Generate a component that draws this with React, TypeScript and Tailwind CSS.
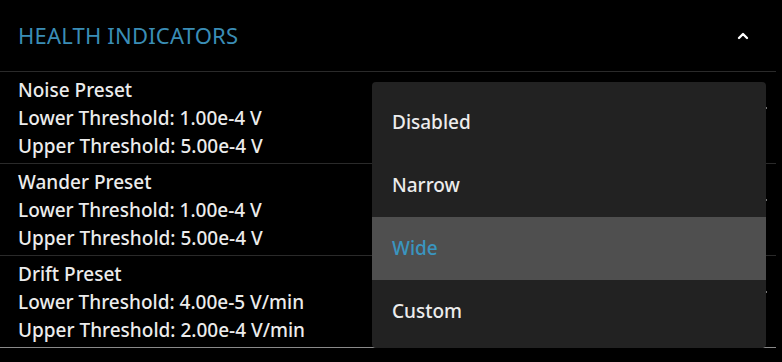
import { ChevronUp } from "lucide-react";

const presets = [
  { name: "Noise Preset", lower: "1.00e-4 V", upper: "5.00e-4 V" },
  { name: "Wander Preset", lower: "1.00e-4 V", upper: "5.00e-4 V" },
  { name: "Drift Preset", lower: "4.00e-5 V/min", upper: "2.00e-4 V/min" },
];

const options = ["Disabled", "Narrow", "Wide", "Custom"];

export default function App() {
  return (
    <div
      className="relative w-[782px] h-[362px] bg-black overflow-hidden text-[#ececec]"
      style={{ fontFamily: '"Noto Sans", "Open Sans", sans-serif' }}
    >
      <div className="w-[776px]">
        {/* Header */}
        <div className="flex items-center justify-between h-[72px] pl-[18px] pr-[25px] border-b border-[#2a2a2a]">
          <h2 className="text-[22px] tracking-[0.2px] text-[#3a8db6]">HEALTH INDICATORS</h2>
          <ChevronUp className="h-4 w-4 text-white" strokeWidth={3.5} />
        </div>

        {presets.map((p, i) => (
          <div
            key={p.name}
            className={`relative pl-[18px] pt-[4px] pb-[3px] text-[19px] font-medium leading-[28px] border-b ${
              i === presets.length - 1 ? "border-[#8a8a8a]" : "border-[#2a2a2a]"
            }`}
          >
            <div>{p.name}</div>
            <div>Lower Threshold: {p.lower}</div>
            <div>Upper Threshold: {p.upper}</div>
            <span className="absolute right-[9px] top-[35px] w-[2px] h-[2px] bg-[#777]" />
          </div>
        ))}
      </div>

      {/* Select menu */}
      <div className="absolute left-[372px] top-[82px] w-[394px] rounded-[4px] bg-[#222222] pt-[9px] pb-[5px]">
        {options.map((o) => (
          <div
            key={o}
            className={`flex items-center h-[63px] pl-[20px] text-[19px] font-medium ${
              o === "Wide" ? "bg-[#4f4f4f] text-[#3a95c0]" : "text-[#ececec]"
            }`}
          >
            {o}
          </div>
        ))}
      </div>
    </div>
  );
}
